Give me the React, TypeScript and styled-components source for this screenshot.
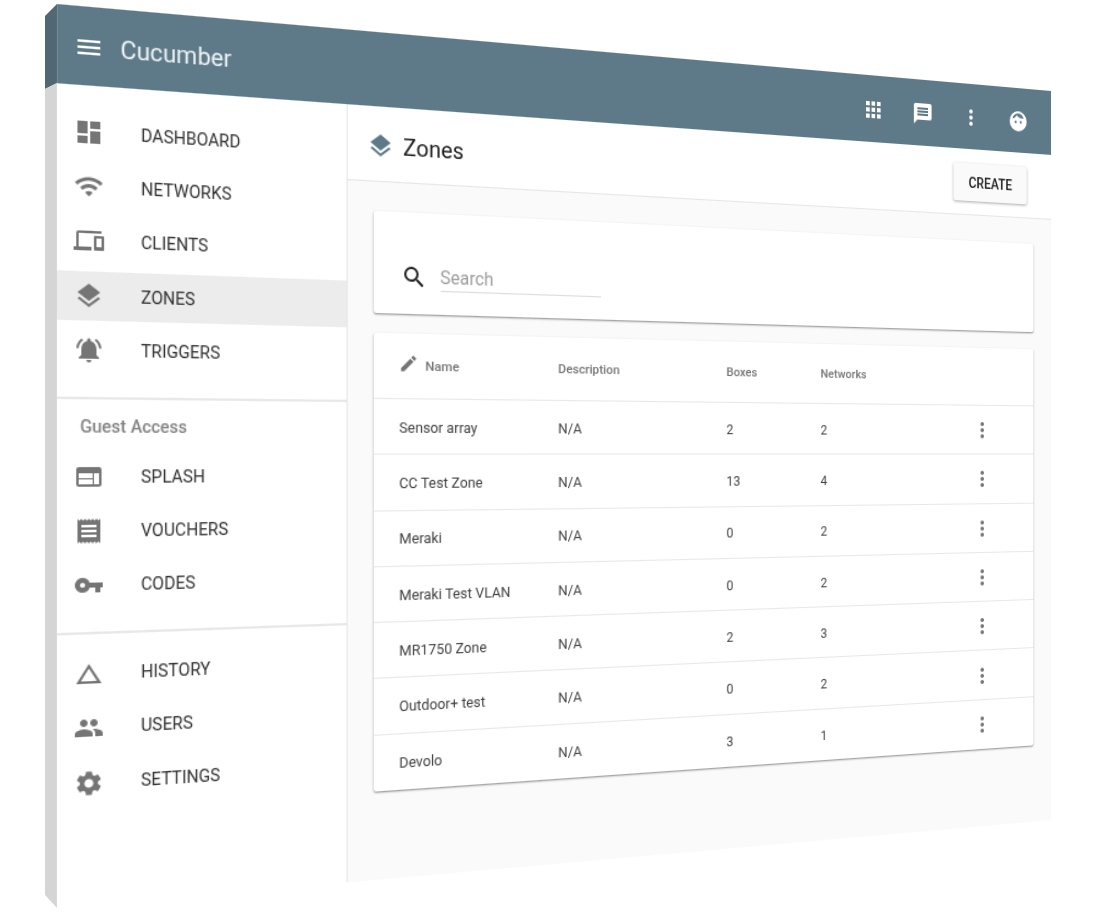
import { FC } from 'react'
import { IconType } from 'react-icons'
import {
  MdApps,
  MdChangeHistory,
  MdDashboard,
  MdDevices,
  MdEdit,
  MdLayers,
  MdMenu,
  MdMessage,
  MdMoreVert,
  MdNotificationsActive,
  MdPeople,
  MdReceipt,
  MdSearch,
  MdSettings,
  MdVpnKey,
  MdWeb,
  MdWifi
} from 'react-icons/md'
import styled, { createGlobalStyle } from 'styled-components'

const GlobalStyle = createGlobalStyle`
  html, body {
    margin: 0;
    background: #fff;
    overflow: hidden;
  }
  * {
    box-sizing: border-box;
  }
`

type NavItem = { icon: IconType; label: string; active?: boolean }

const mainNav: NavItem[] = [
  { icon: MdDashboard, label: 'DASHBOARD' },
  { icon: MdWifi, label: 'NETWORKS' },
  { icon: MdDevices, label: 'CLIENTS' },
  { icon: MdLayers, label: 'ZONES', active: true },
  { icon: MdNotificationsActive, label: 'TRIGGERS' }
]

const guestNav: NavItem[] = [
  { icon: MdWeb, label: 'SPLASH' },
  { icon: MdReceipt, label: 'VOUCHERS' },
  { icon: MdVpnKey, label: 'CODES' }
]

const adminNav: NavItem[] = [
  { icon: MdChangeHistory, label: 'HISTORY' },
  { icon: MdPeople, label: 'USERS' },
  { icon: MdSettings, label: 'SETTINGS' }
]

const zones = [
  { name: 'Sensor array', boxes: 2, networks: 2 },
  { name: 'CC Test Zone', boxes: 13, networks: 4 },
  { name: 'Meraki', boxes: 0, networks: 2 },
  { name: 'Meraki Test VLAN', boxes: 0, networks: 2 },
  { name: 'MR1750 Zone', boxes: 2, networks: 3 },
  { name: 'Outdoor+ test', boxes: 0, networks: 2 },
  { name: 'Devolo', boxes: 3, networks: 1 }
]

const NavList: FC<{ items: NavItem[] }> = ({ items }) => (
  <NavGroup>
    {items.map((item) => (
      <NavRow key={item.label} $active={item.active}>
        <NavIcon>
          <item.icon size={24} />
        </NavIcon>
        <NavLabel>{item.label}</NavLabel>
      </NavRow>
    ))}
  </NavGroup>
)

const FaceIcon: FC = () => (
  <svg width="24" height="24" viewBox="0 0 24 24">
    <circle cx="12" cy="12" r="10" fill="#fff" />
    <path d="M5.500 9.500C7.500 9 9.500 7.500 10.300 6 12 8 15 9.500 18.500 9 17.500 6 15.500 4.300 12 4.300 8.500 4.300 6 6.500 5.500 9.500z" fill="#5e7a88" />
    <circle cx="9" cy="12.800" r="1.300" fill="#5e7a88" />
    <circle cx="15" cy="12.800" r="1.300" fill="#5e7a88" />
  </svg>
)

const App: FC = () => (
  <>
    <GlobalStyle />
    <Stage>
      <SideEdge width="12" height="912" viewBox="45 0 12 912">
        <polygon points="45,16 57,4 57,83 45,89" fill="#516874" />
        <polygon points="45,89 57,83 57,908 45,895" fill="#d5d5d5" />
      </SideEdge>
      <Face>
        <TopBar>
          <MenuButton>
            <MdMenu size={24} />
          </MenuButton>
          <AppTitle>Cucumber</AppTitle>
          <TopActions>
            <MdApps size={24} />
            <MdMessage size={24} />
            <MdMoreVert size={24} />
            <FaceIcon />
          </TopActions>
        </TopBar>
        <Body>
          <Sidebar>
            <NavList items={mainNav} />
            <Divider $after={10} />
            <SubHeader>Guest Access</SubHeader>
            <NavList items={guestNav} />
            <Divider $after={12} />
            <NavList items={adminNav} />
          </Sidebar>
          <Main>
            <PageBar>
              <PageTitle>
                <MdLayers size={24} color="#5e7a88" />
                <h1>Zones</h1>
              </PageTitle>
              <CreateButton>CREATE</CreateButton>
            </PageBar>
            <Content>
              <SearchCard>
                <MdSearch size={24} color="#212121" />
                <SearchField>Search</SearchField>
              </SearchCard>
              <TableCard>
                <HeadRow>
                  <NameHead>
                    <MdEdit size={18} color="#757575" />
                    <span>Name</span>
                  </NameHead>
                  <span>Description</span>
                  <span>Boxes</span>
                  <span>Networks</span>
                  <span />
                </HeadRow>
                {zones.map((zone) => (
                  <ZoneRow key={zone.name}>
                    <span>{zone.name}</span>
                    <span>N/A</span>
                    <span>{zone.boxes}</span>
                    <span>{zone.networks}</span>
                    <MdMoreVert size={24} color="#757575" />
                  </ZoneRow>
                ))}
              </TableCard>
            </Content>
          </Main>
        </Body>
      </Face>
    </Stage>
  </>
)

const Stage = styled.div`
  position: relative;
  width: 1112px;
  height: 912px;
  overflow: hidden;
  font-family: Roboto, 'Liberation Sans', sans-serif;
`

const SideEdge = styled.svg`
  position: absolute;
  left: 45px;
  top: 0;
`

// the whole window is drawn flat at 960x730, then put in perspective
const Face = styled.div`
  display: flex;
  flex-direction: column;
  width: 960px;
  height: 730px;
  transform-origin: 0 0;
  transform: matrix3d(1.29817, 0.113375, 0, 0.00025, 0, 1.23836, 0, 0, 0, 0, 1, 0, 57, 4, 0, 1);
  filter: blur(0.4px);
`

const TopBar = styled.header`
  display: flex;
  align-items: center;
  flex: none;
  height: 64px;
  padding: 2px 27px 0 13px;
  background: #5e7a88;
  color: #fff;
`

const MenuButton = styled.div`
  display: flex;
  margin-right: 13px;
`

const AppTitle = styled.div`
  font-size: 19.800px;
  color: #eef2f4;
`

const TopActions = styled.div`
  display: flex;
  align-items: center;
  gap: 31px;
  margin-left: auto;
`

const Body = styled.div`
  display: flex;
  flex: 1;
  min-height: 0;
`

const Sidebar = styled.nav`
  flex: none;
  width: 240px;
  padding-top: 17.5px;
  background: #fff;
  border-right: 1.5px solid #e6e6e6;
`

const NavGroup = styled.div`
  display: flex;
  flex-direction: column;
  gap: 4.4px;
`

const NavRow = styled.div<{ $active?: boolean }>`
  display: flex;
  align-items: center;
  height: 40px;
  padding-left: 13px;
  background: ${({ $active }) => ($active ? '#ececec' : 'transparent')};
`

const NavIcon = styled.span`
  display: flex;
  width: 53.5px;
  color: #757575;
`

const NavLabel = styled.span`
  font-size: 14px;
  color: #333;
`

const Divider = styled.div<{ $after: number }>`
  height: 1.5px;
  margin: 18px 0 ${({ $after }) => $after}px;
  background: #e8e8e8;
`

const SubHeader = styled.div`
  height: 24px;
  margin-bottom: 9px;
  padding-left: 18px;
  font-size: 14px;
  font-weight: 500;
  line-height: 24px;
  color: #858585;
`

const Main = styled.main`
  display: flex;
  flex-direction: column;
  flex: 1;
  min-width: 0;
  background: #fafafa;
`

const PageBar = styled.div`
  display: flex;
  align-items: center;
  justify-content: space-between;
  flex: none;
  height: 65px;
  padding: 0 29px 0 17px;
  background: #fff;
  border-bottom: 1.5px solid #e6e6e6;
`

const PageTitle = styled.div`
  display: flex;
  align-items: center;
  gap: 8px;
  padding-top: 3px;

  h1 {
    margin: 0;
    font-size: 20px;
    font-weight: 400;
    color: #212121;
  }
`

const CreateButton = styled.button`
  width: 85px;
  height: 37px;
  padding: 1px 0 0;
  border: none;
  border-radius: 2px;
  background: #fafafa;
  box-shadow: 0 1px 3px rgba(0, 0, 0, 0.35);
  font-family: inherit;
  font-size: 14px;
  font-weight: 500;
  color: #212121;
`

const Content = styled.div`
  display: flex;
  flex-direction: column;
  gap: 17px;
  padding: 25px 21px 0 22.500px;
`

const SearchCard = styled.section`
  display: flex;
  align-items: flex-end;
  gap: 12px;
  height: 88px;
  padding: 0 0 20px 24px;
  background: #fff;
  border-radius: 2px;
  box-shadow: 0 1px 2px rgba(0, 0, 0, 0.45);
`

const SearchField = styled.div`
  width: 151px;
  height: 25px;
  font-size: 16px;
  line-height: 25px;
  color: #9e9e9e;
  border-bottom: 1px solid #dcdcdc;
`

const TableCard = styled.section`
  background: #fff;
  border-radius: 2px;
  box-shadow: 0 1px 2px rgba(0, 0, 0, 0.45);
`

const HeadRow = styled.div`
  display: grid;
  grid-template-columns: 147px 167px 99px 1fr 24px;
  align-items: center;
  height: 57px;
  padding: 0 48px 0 23px;
  border-bottom: 1.500px solid #e8e8e8;
  font-size: 11.700px;
  font-weight: 500;
  color: #757575;
`

const NameHead = styled.div`
  display: flex;
  align-items: center;
  gap: 6.500px;
  margin-left: -1px;

  svg {
    margin-top: -4px;
  }
`

const ZoneRow = styled.div`
  display: grid;
  grid-template-columns: 147px 167px 99px 1fr 24px;
  align-items: center;
  height: 48.3px;
  padding: 1px 48px 0 23px;
  border-bottom: 1.500px solid #e8e8e8;
  font-size: 12.800px;
  color: #424242;

  &:last-child {
    border-bottom: none;
  }
`

export default App
